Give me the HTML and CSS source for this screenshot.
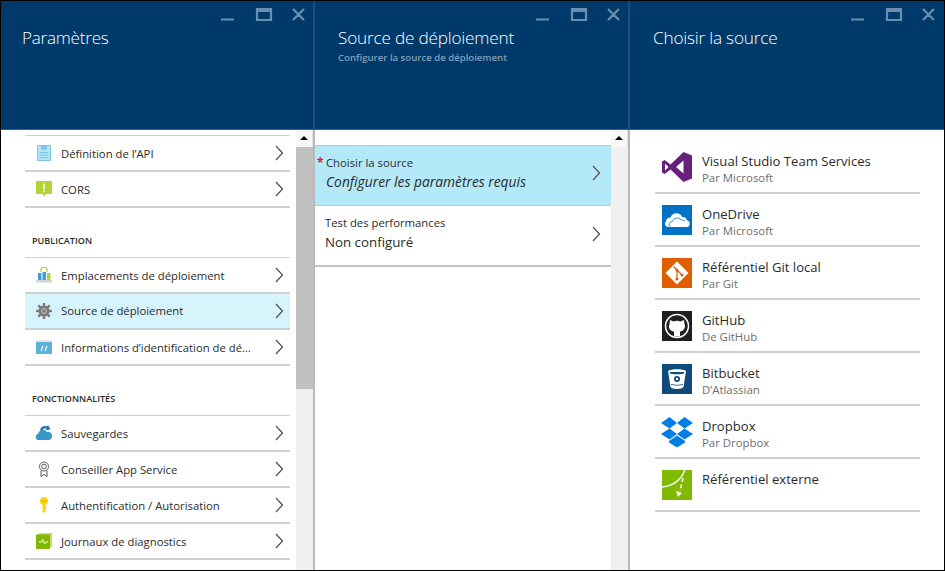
FILE: index.html
```html
<!DOCTYPE html>
<html lang="fr">
<head>
<meta charset="utf-8">
<title>Source de déploiement</title>
<link rel="stylesheet" href="styles.css">
</head>
<body>
<div class="portal">
  <section class="blade blade-first">
    <header class="head">
      <div class="controls">
        <svg class="ctl" viewBox="0 0 84 14" width="84" height="14"><path d="M0 11.500h13M36 1h14v11H36zM36 3h14M72 1l11 11M83 1L72 12"/></svg>
      </div>
      <h1 class="title">Paramètres</h1>
    </header>
    <div class="body">
      <div class="scroll-area">
        <div class="list">
          <div class="row"><svg class="ri" viewBox="0 0 16 16"><path fill="#b5e4f6" stroke="#7cc7e8" d="M1.500.5h13v15h-13z"/><path fill="#7cc7e8" d="M5 1h6v3.500H5zM3.500 7h9v1h-9zM3.500 9.500h9v1h-9zM3.500 12h9v1h-9z"/></svg><span class="rl">Définition de l’API</span><svg class="chev" viewBox="0 0 9 16"><path d="M1 1l6.500 7L1 15"/></svg></div>
          <div class="row"><svg class="ri" viewBox="0 0 16 16"><path fill="#b4d334" d="M1 0h14a1 1 0 0 1 1 1v11a1 1 0 0 1-1 1h-5l-2 3-1-3H1a1 1 0 0 1-1-1V1a1 1 0 0 1 1-1z"/><path fill="#fff" d="M7.200 2.500h1.600v6H7.200zM7.200 9.700h1.600v1.600H7.200z"/></svg><span class="rl">CORS</span><svg class="chev" viewBox="0 0 9 16"><path d="M1 1l6.500 7L1 15"/></svg></div>
        </div>
        <div class="section">PUBLICATION</div>
        <div class="list">
          <div class="row"><svg class="ri" viewBox="0 0 16 16"><path fill="none" stroke="#b4d334" stroke-width="1.300" d="M5 5V3a3 3 0 0 1 6 0v2"/><path fill="#d5d5d5" d="M0 13h16v2.500H0z"/><path fill="#3aa0d8" d="M2 6h3.500v7H2zM6.500 5h3.500v8H6.500z"/><path fill="#b4d334" d="M11 6h3.500v7H11z"/></svg><span class="rl">Emplacements de déploiement</span><svg class="chev" viewBox="0 0 9 16"><path d="M1 1l6.500 7L1 15"/></svg></div>
          <div class="row row-active"><svg class="ri" viewBox="0 0 16 16"><circle cx="8" cy="8" r="5.500" fill="#7a7a7a"/><path stroke="#7a7a7a" stroke-width="2.400" d="M8 0v16M0 8h16M2.300 2.300l11.400 11.400M13.700 2.300L2.300 13.700"/><circle cx="8" cy="8" r="4" fill="#7a7a7a"/><circle cx="8" cy="8" r="2.400" fill="none" stroke="#c9c9c9"/></svg><span class="rl">Source de déploiement</span><svg class="chev" viewBox="0 0 9 16"><path d="M1 1l6.500 7L1 15"/></svg></div>
          <div class="row"><svg class="ri" viewBox="0 0 16 16"><path fill="#59b4d9" d="M0 1h16v14H0z"/><path fill="#e6e6e6" d="M0 1h16v2H0z"/><path stroke="#fff" stroke-width="1.200" d="M5 12l2-5M9 12l2-5"/></svg><span class="rl">Informations d’identification de dé…</span><svg class="chev" viewBox="0 0 9 16"><path d="M1 1l6.500 7L1 15"/></svg></div>
        </div>
        <div class="section">FONCTIONNALITÉS</div>
        <div class="list">
          <div class="row"><svg class="ri" viewBox="0 0 16 16"><path fill="#3999c6" d="M3 15a3 3 0 0 1-1-5.900A5 5 0 0 1 11 7a3.800 3.800 0 0 1 5 4c0 2.500-1.500 4-3.500 4z"/><path fill="#1e6fb5" d="M4 5a5 5 0 0 1 7-3.500L12 0l2.500 4.500L9.500 5l1-1.500A3.500 3.500 0 0 0 6 6z"/></svg><span class="rl">Sauvegardes</span><svg class="chev" viewBox="0 0 9 16"><path d="M1 1l6.500 7L1 15"/></svg></div>
          <div class="row"><svg class="ri" viewBox="0 0 16 16"><g fill="none" stroke="#5a5a5a"><circle cx="8" cy="5.500" r="4.500"/><circle cx="8" cy="5.500" r="2.300"/><path d="M5 9.500v6l3-2 3 2v-6"/></g></svg><span class="rl">Conseiller App Service</span><svg class="chev" viewBox="0 0 9 16"><path d="M1 1l6.500 7L1 15"/></svg></div>
          <div class="row"><svg class="ri" viewBox="0 0 16 16"><ellipse cx="8" cy="4" rx="4" ry="4" fill="#fcd116"/><path fill="#fcd116" d="M6.500 7h3v7.500L8 16l-1.500-1.500z"/><path fill="#e0a800" d="M5.500 3.500h5v1h-5zM9 10h1v1H9z"/></svg><span class="rl">Authentification / Autorisation</span><svg class="chev" viewBox="0 0 9 16"><path d="M1 1l6.500 7L1 15"/></svg></div>
          <div class="row"><svg class="ri" viewBox="0 0 16 16"><path fill="#c4dd6c" d="M3 0h13v14H3z"/><path fill="#7fba00" d="M0 1.500h14V16H0z"/><path fill="none" stroke="#fff" d="M3 9h2.500l1.200-2.500L8.500 11l1.300-2H12"/></svg><span class="rl">Journaux de diagnostics</span><svg class="chev" viewBox="0 0 9 16"><path d="M1 1l6.500 7L1 15"/></svg></div>
        </div>
      </div>
      <div class="scrollbar"><div class="sb-btn"><span class="arrow"></span></div><div class="sb-thumb"></div></div>
    </div>
  </section>

  <section class="blade blade-mid">
    <header class="head">
      <div class="controls">
        <svg class="ctl" viewBox="0 0 84 14" width="84" height="14"><path d="M0 11.500h13M36 1h14v11H36zM36 3h14M72 1l11 11M83 1L72 12"/></svg>
      </div>
      <h1 class="title">Source de déploiement</h1>
      <p class="subtitle">Configurer la source de déploiement</p>
    </header>
    <div class="body">
      <div class="scroll-area form">
        <div class="field field-active"><svg class="chev" viewBox="0 0 9 16"><path d="M1 1l6.500 7L1 15"/></svg>
          <div class="ft"><span class="req">*</span>Choisir la source</div>
          <div class="fv fv-i">Configurer les paramètres requis</div>
        </div>
        <div class="field"><svg class="chev" viewBox="0 0 9 16"><path d="M1 1l6.500 7L1 15"/></svg>
          <div class="ft">Test des performances</div>
          <div class="fv">Non configuré</div>
        </div>
      </div>
      <div class="scrollbar"><div class="sb-btn"><span class="arrow"></span></div></div>
    </div>
  </section>

  <section class="blade blade-last">
    <header class="head">
      <div class="controls">
        <svg class="ctl" viewBox="0 0 84 14" width="84" height="14"><path d="M0 11.500h13M36 1h14v11H36zM36 3h14M72 1l11 11M83 1L72 12"/></svg>
      </div>
      <h1 class="title">Choisir la source</h1>
    </header>
    <div class="body sources">
      <div class="src"><svg class="si" viewBox="0 0 30 30"><path fill="#68217a" d="M21.500 0L30 3.400v23.200L21.500 30 8.500 17.500 2.700 22 0 20.600V9.400L2.700 8l5.800 4.500zM21.500 8.500L14 15l7.500 6.500zM3 11.500v7L6.500 15z"/></svg><div><div class="sn">Visual Studio Team Services</div><div class="sp">Par Microsoft</div></div></div>
      <div class="src"><svg class="si" viewBox="0 0 30 30"><path fill="#0072c6" d="M0 0h30v30H0z"/><path fill="#fff" d="M6 22a3.300 3.300 0 0 1-2-5.800 4 4 0 0 1 4.500-3.700 6.300 6.300 0 0 1 11.700-.5 4.500 4.500 0 0 1 4.800 3.300 3.500 3.500 0 0 1 .5 6.700z"/><path fill="none" stroke="#0072c6" stroke-width=".8" d="M8.500 22c-2-1-1.800-5 1.700-5.500 1-3.500 6.500-5 9-1.500 2 0 3 .6 3.800 1.500"/></svg><div><div class="sn">OneDrive</div><div class="sp">Par Microsoft</div></div></div>
      <div class="src"><svg class="si" viewBox="0 0 30 30"><path fill="#e05d00" d="M0 0h30v30H0z"/><path fill="#fff" d="M15 3.500L26.500 15 15 26.500 3.500 15z"/><path fill="none" stroke="#e05d00" stroke-width="1.200" d="M11.500 8.500L15 12v9M15 12l5 5"/><circle cx="15" cy="21" r="1.500" fill="#e05d00"/><circle cx="20" cy="17" r="1.500" fill="#e05d00"/><circle cx="15" cy="12" r="1.500" fill="#e05d00"/></svg><div><div class="sn">Référentiel Git local</div><div class="sp">Par Git</div></div></div>
      <div class="src"><svg class="si" viewBox="0 0 30 30"><path fill="#1e1e1e" d="M0 0h30v30H0z"/><circle cx="15" cy="15" r="11.500" fill="none" stroke="#fff" stroke-width="1.500"/><path fill="#fff" d="M8 9l3.500 1.500a10 10 0 0 1 7 0L22 9l.5 4c1.500 4-1 7-4.500 7.500v5h-6v-5C8 20 6 17 7.500 13z"/></svg><div><div class="sn">GitHub</div><div class="sp">De GitHub</div></div></div>
      <div class="src"><svg class="si" viewBox="0 0 30 30"><path fill="#0f4a7c" d="M0 0h30v30H0z"/><path fill="#fff" d="M6 7c2-2.500 16-2.500 18 0l-2.500 16c-1 2.500-12 2.500-13 0z"/><path fill="#0f4a7c" d="M8 8h14v1.500c-3 1-11 1-14 0z"/><circle cx="15" cy="15" r="3" fill="#0f4a7c"/><circle cx="15" cy="15" r="1.200" fill="#fff"/><path fill="#0f4a7c" d="M9 20c3 1 9 1 12 0v.8c-3 1-9 1-12 0z"/></svg><div><div class="sn">Bitbucket</div><div class="sp">D’Atlassian</div></div></div>
      <div class="src"><svg class="si si-drop" viewBox="0 0 32 30"><path fill="#007ee5" d="M8.500 0L16 6 8.500 11.500 0 6zM23.500 0L32 6l-8.500 5.500L16 6zM8.500 11.500L16 17l-7.500 5.500L0 17zM23.500 11.500L32 17l-8.500 5.500L16 17z"/><path fill="#007ee5" d="M8 24l8-5.500 8 5.500v1.500L16 30.500 8 25.500z"/></svg><div><div class="sn">Dropbox</div><div class="sp">Par Dropbox</div></div></div>
      <div class="src"><svg class="si" viewBox="0 0 30 30"><path fill="#7fba00" d="M0 0h30v30H0z"/><path fill="none" stroke="#fff" stroke-width="1.500" d="M0 17c11-1 19-7 23-17"/><path fill="none" stroke="#fff" stroke-width="1.500" stroke-dasharray="4 2.500" d="M21 8l-3 13"/><path fill="#fff" d="M14 21l6 2-4 4z"/></svg><div><div class="sn">Référentiel externe</div></div></div>
    </div>
  </section>
</div>
</body>
</html>
```
FILE: styles.css
```css
* { box-sizing: border-box; }
html, body { margin: 0; padding: 0; }
body { width: 945px; height: 571px; overflow: hidden; background: #fff; font-family: "Open Sans", "Noto Sans", sans-serif; color: #2b2b2b; }
.portal { width: 945px; height: 571px; border: 1px solid #000; display: grid; grid-template-columns: 314px 315px 314px; overflow: hidden; }
.blade { display: flex; flex-direction: column; min-width: 0; height: 569px; }
.head { position: relative; height: 129px; flex: none; background: #003a6a; border-bottom: 1px solid #2c6088; border-right: 2px solid #1b4f7e; padding: 22px 0 0 23px; }
.blade-first .head { padding-left: 21px; }
.blade-last .head { border-right: 0; }
.controls { position: absolute; top: 7px; right: 8px; line-height: 0; }
.blade-mid .controls { right: 8px; }
.blade-last .controls { right: 9px; }
.ctl { fill: none; stroke: #6b8eae; stroke-width: 2.200; }
.title { margin: 0; font-size: 17.200px; line-height: 30px; font-weight: 300; color: #fff; letter-spacing: -0.200px; }
.blade-first .title { font-size: 17px; }
.subtitle { margin: -1px 0 0; font-size: 9.600px; line-height: 12px; font-weight: 600; color: #7f9fbb; }
.body { flex: 1; display: flex; min-height: 0; overflow: hidden; border-right: 2px solid #b9b9b9; }
.blade-last .body { border-right: 0; }
.scroll-area { flex: 1; min-width: 0; padding: 5px 6px 0 24px; }
.form { padding: 15px 0 0; }
.scrollbar { flex: none; width: 17px; background: #f0f0f0; display: flex; flex-direction: column; }
.sb-btn { flex: none; height: 17px; background: #f8f8f8; border-right: 1px solid #e2e2e2; display: flex; align-items: center; justify-content: center; padding-bottom: 2px; }
.arrow { width: 0; height: 0; border: 4px solid transparent; border-top: 0; border-bottom: 4px solid #000; }
.sb-thumb { height: 242px; background: #c1c1c1; }
.list { border-top: 1px solid #cfcfcf; }
.row { height: 36px; display: flex; align-items: center; padding: 0 6px 0 11px; border-bottom: 2px solid #d0d0d0; }
.row-active { background: #d7f4fd; border-bottom-color: #c5d2d8; }
.ri { flex: none; width: 16px; height: 16px; }
.rl { flex: 1; margin-left: 9px; padding-top: 2px; font-size: 11.300px; line-height: 16px; white-space: nowrap; }
.row-active .rl { padding-top: 0; }
.chev { flex: none; width: 9px; height: 16px; fill: none; stroke: #555; stroke-width: 1.300; }
.section { height: 49px; padding: 27px 0 0 7px; font-size: 9.100px; line-height: 12px; font-weight: 600; color: #2b2b2b; }
.field { position: relative; height: 61px; padding: 9px 0 0 10px; }
.field + .field { border-bottom: 2px solid #c4c4c4; }
.field-active { background: #b3e9f9; border-top: 1px solid #c4c4c4; border-bottom: 1px solid #c4c4c4; padding-left: 2px; }
.field .chev { position: absolute; right: 10px; top: 20px; }
.field-active .chev { top: 19px; }
.req { display: inline-block; width: 9px; color: #e81123; font-weight: 700; font-size: 12px; line-height: 12px; }
.ft { font-size: 11.300px; line-height: 16px; white-space: nowrap; }
.fv { font-size: 13.300px; line-height: 20px; margin-top: 1px; white-space: nowrap; }
.fv-i { padding-left: 9px; font-style: italic; font-size: 13.800px; }
.sources { display: block; padding: 11px 0 0 25px; }
.src { width: 265px; height: 53px; display: flex; padding: 11px 0 0 7px; border-bottom: 2px solid #d0d0d0; }
.si { flex: none; width: 30px; height: 30px; margin-right: 10px; }
.si-drop { width: 32px; margin: 0 9px 0 -1px; }
.sn { font-size: 13.100px; line-height: 18px; white-space: nowrap; }
.sp { font-size: 11.400px; line-height: 16px; color: #6e6e6e; white-space: nowrap; }
```
